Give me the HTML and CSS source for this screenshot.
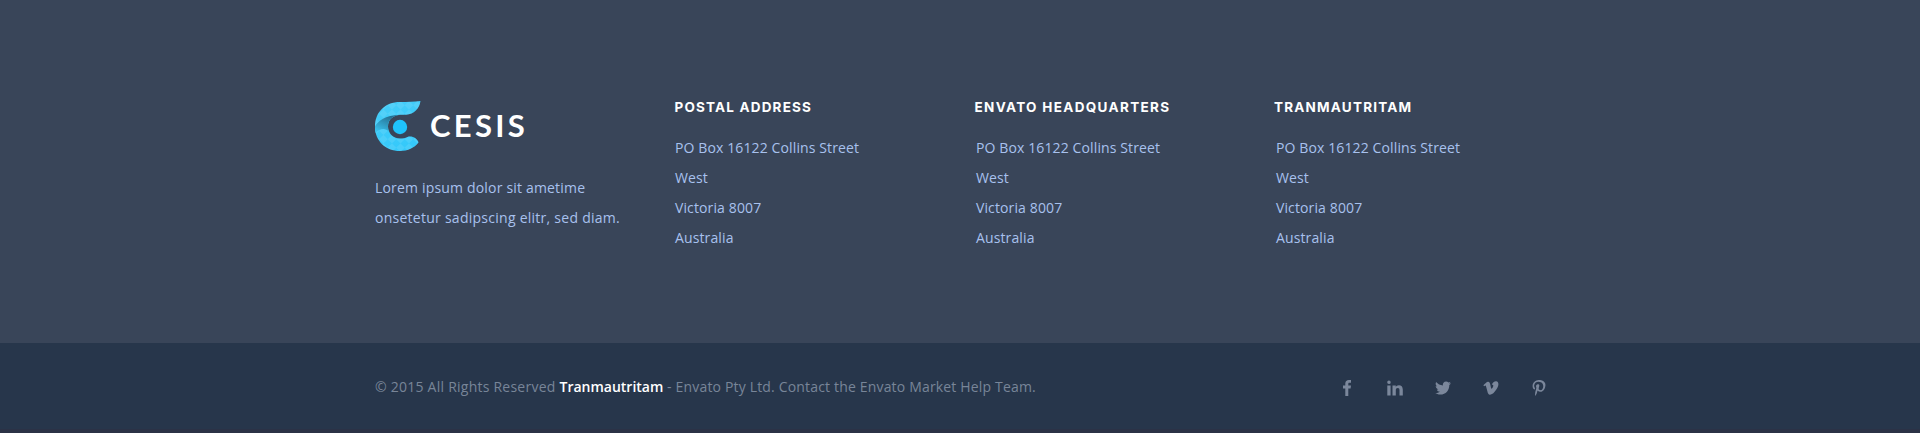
FILE: index.html
```html
<!DOCTYPE html>
<html lang="en">
<head>
<meta charset="utf-8">
<title>Cesis</title>
<link rel="stylesheet" href="styles.css">
</head>
<body>
<footer class="footer">
  <section class="footer-top">
    <div class="container columns">
      <div class="brand">
        <a class="logo">
          <svg class="logo-mark" viewBox="0 0 46 50">
            <defs>
              <linearGradient id="body" x1="0" y1="0" x2="0.4" y2="1"><stop offset="0" stop-color="#47cdf8"/><stop offset="1" stop-color="#35c9fa"/></linearGradient>
              <linearGradient id="fold" gradientUnits="userSpaceOnUse" x1="15" y1="15" x2="6" y2="34"><stop offset="0" stop-color="#256f91"/><stop offset="1" stop-color="#3ccaf7"/></linearGradient>
              <pattern id="check" width="12" height="12" patternUnits="userSpaceOnUse" patternTransform="rotate(45)"><rect width="6" height="6" fill="#8fdff8" opacity=".22"/><rect x="6" y="6" width="6" height="6" fill="#8fdff8" opacity=".22"/></pattern>
              <path id="shape" d="M45.500 0C39 .8 33 .9 25 1C10 1 0 11.500 0 25.500C0 40 10.500 50 25 50C33 50 39 47 43.500 41.500C42.500 37.500 37 34.300 32.500 36C30 37.200 28 37.500 25 37.500C18 37.500 13 32 13 25.500C13 18.500 18 14.500 25 13.800L31 13.700C39 13.500 44.500 7.500 45.500 0Z"/>
            </defs>
            <use href="#shape" fill="url(#body)"/>
            <use href="#shape" fill="url(#check)"/>
            <path d="M0 25.500C3 20 10 14.500 25 13.800C18 14.500 13 18.500 13 25.500C13 28 13.500 29.500 14 31C10 26 4 28 .8 32C0 29 0 27 0 25.500Z" fill="url(#fold)"/>
            <circle cx="25" cy="26" r="7.200" fill="#1fc3fb"/>
          </svg>
          <span class="logo-name">CESIS</span>
        </a>
        <p class="copy">Lorem ipsum dolor sit ametime<br><span class="copy-wide">onsetetur sadipscing elitr, sed diam.</span></p>
      </div>
      <div class="column">
        <h4 class="heading heading-postal">POSTAL ADDRESS</h4>
        <p class="copy">PO Box 16122 Collins Street<br>West<br>Victoria 8007<br>Australia</p>
      </div>
      <div class="column column-inset">
        <h4 class="heading heading-envato">ENVATO HEADQUARTERS</h4>
        <p class="copy">PO Box 16122 Collins Street<br>West<br>Victoria 8007<br>Australia</p>
      </div>
      <div class="column column-inset">
        <h4 class="heading heading-author">TRANMAUTRITAM</h4>
        <p class="copy">PO Box 16122 Collins Street<br>West<br>Victoria 8007<br>Australia</p>
      </div>
    </div>
  </section>
  <section class="footer-bottom">
    <div class="container bar">
      <p class="legal"><span class="rights">© 2015 All Rights Reserved </span><strong class="author">Tranmautritam</strong> - Envato Pty Ltd. Contact the Envato Market Help Team.</p>
      <nav class="social">
        <svg class="icon" viewBox="0 0 16 16"><path d="M12 .1V2.700H10.600C9.500 2.700 9.300 3.200 9.300 4V5.600H12L11.600 8.400H9.300V16H6.300V8.400H4V5.600H6.300V3.600C6.300 1.300 7.700 0 9.900 0C10.900 0 11.700.1 12 .1Z"/></svg>
        <svg class="icon" viewBox="0 0 16 16"><path d="M.3 5.500H3.600V15.500H.3ZM2 .6A1.750 1.750 0 1 1 1.900 4.100A1.750 1.750 0 1 1 2 .6ZM5.500 5.500H8.800V6.900C9.300 6.100 10.200 5.200 12 5.200C14.200 5.200 15.800 6.600 15.800 9.700V15.500H12.500V10.200C12.500 8.800 12 7.900 10.800 7.900C9.500 7.900 8.800 8.800 8.800 10.200V15.500H5.500Z"/></svg>
        <svg class="icon" viewBox="0 0 16 16"><path d="M16 3.200C15.500 3.900 15 4.500 14.300 5C14.500 10 11 14.600 5.200 14.600C3.300 14.600 1.500 14 0 13.100C1.800 13.300 3.500 12.800 4.900 11.700C3.400 11.700 2.200 10.700 1.800 9.400C2.300 9.500 2.800 9.500 3.300 9.300C1.700 9 .7 7.600.7 6.100C1.100 6.300 1.600 6.500 2.100 6.500C.7 5.500.2 3.600 1.100 2.100C2.800 4.100 5.200 5.300 7.900 5.500C7.400 3.300 9 1.400 11.100 1.400C12 1.400 12.900 1.800 13.500 2.400C14.200 2.300 14.900 2 15.500 1.700C15.300 2.400 14.800 3 14.100 3.500C14.800 3.500 15.400 3.400 16 3.200Z"/></svg>
        <svg class="icon" viewBox="0 0 16 16"><path d="M15.400 4.700C15.200 6.800 13.800 9 11.800 11.600C9.700 14.300 8 14.800 6.900 14.800C5.500 14.800 4.900 13.500 4.300 11L3.200 7C2.900 5.900 2.700 5.500 2.400 5.500C2.200 5.500 1.700 5.700 1.100 6.200L.4 5.200C2.200 3.600 3.600 1.800 5 1.700C6.500 1.600 7 3 7.400 5.100C7.900 8.100 8.200 8.800 8.600 8.800C8.900 8.800 10.300 6.700 10.300 5.700C10.300 4.800 9.700 4.600 8.800 5C9.600 2.500 11.300 1.200 13.200 1.300C14.700 1.400 15.500 2.600 15.400 4.700Z"/></svg>
        <svg class="icon" viewBox="0 0 16 16"><path d="M6.500 10.600C6.100 12.800 5.600 14.800 4.200 16C3.700 12.800 4.800 10.500 5.400 7.800C4.400 6 5.500 3.500 7.500 4.300C10 5.300 5.800 9.500 8.900 10.100C11.900 10.700 13.100 6 11.600 3.700C9.800 1 3.800.8 3.200 5.200C3 6.600 3.700 7.500 4 8C4.100 8.500 3.800 9.600 3.400 9.500C2.200 9 1.500 7.500 1.600 5.700C1.700 2.500 4.600.3 7.600 0C11.300-.3 14.800 1.700 14.400 5.500C14 9.600 11.700 12 8.900 11.800C7.700 11.700 7.200 11.200 6.500 10.600Z"/></svg>
      </nav>
    </div>
  </section>
</footer>
</body>
</html>
```

FILE: styles.css
```css
body {
  margin: 0;
  font-family: "Open Sans", "Liberation Sans", sans-serif;
  font-size: 14px;
}

.footer {
  height: 433px;
  display: flex;
  flex-direction: column;
  background: #2b3246;
}

.footer-top {
  height: 343px;
  box-sizing: border-box;
  padding-top: 100px;
  background: #394559;
}

.container {
  width: 1170px;
  margin: 0 auto;
}

.columns {
  display: grid;
  grid-template-columns: 299px 300px 300px 271px;
}

.logo {
  display: flex;
  align-items: center;
  height: 52px;
}

.logo-mark {
  width: 46px;
  height: 50px;
}

.logo-name {
  margin-left: 9px;
  padding-bottom: 2px;
  font: 700 31px/50px Lato, sans-serif;
  letter-spacing: 3.3px;
  color: #fff;
}

.copy {
  margin: 0;
  line-height: 30px;
  letter-spacing: 0.12px;
  color: #a8c1ee;
  white-space: nowrap;
}

.brand .copy {
  margin-top: 21px;
  letter-spacing: 0.18px;
}

.copy-wide {
  letter-spacing: 0.26px;
}

.heading {
  margin: 0 0 19px;
  padding-left: 0.5px;
  font: 700 13.5px/14px Inter, sans-serif;
  color: #fff;
  white-space: nowrap;
}

.heading-postal {
  letter-spacing: 1.18px;
}

.heading-envato {
  letter-spacing: 1.33px;
}

.heading-author {
  padding-left: 0;
  letter-spacing: 1.2px;
}

.column .copy {
  padding-left: 1px;
}

.column-inset .copy {
  padding-left: 2px;
}

.footer-bottom {
  height: 86px;
  background: #27364b;
}

.bar {
  display: flex;
  justify-content: space-between;
  align-items: center;
  height: 90px;
}

.legal {
  margin: 0;
  padding-bottom: 4px;
  letter-spacing: 0.17px;
  color: #788598;
}

.rights {
  letter-spacing: 0.24px;
}

.author {
  font-weight: 600;
  letter-spacing: 0;
  color: #fff;
}

.social {
  display: flex;
  gap: 32px;
  margin-right: -2px;
}

.icon {
  width: 16px;
  height: 16px;
  fill: #7b879b;
}
```
